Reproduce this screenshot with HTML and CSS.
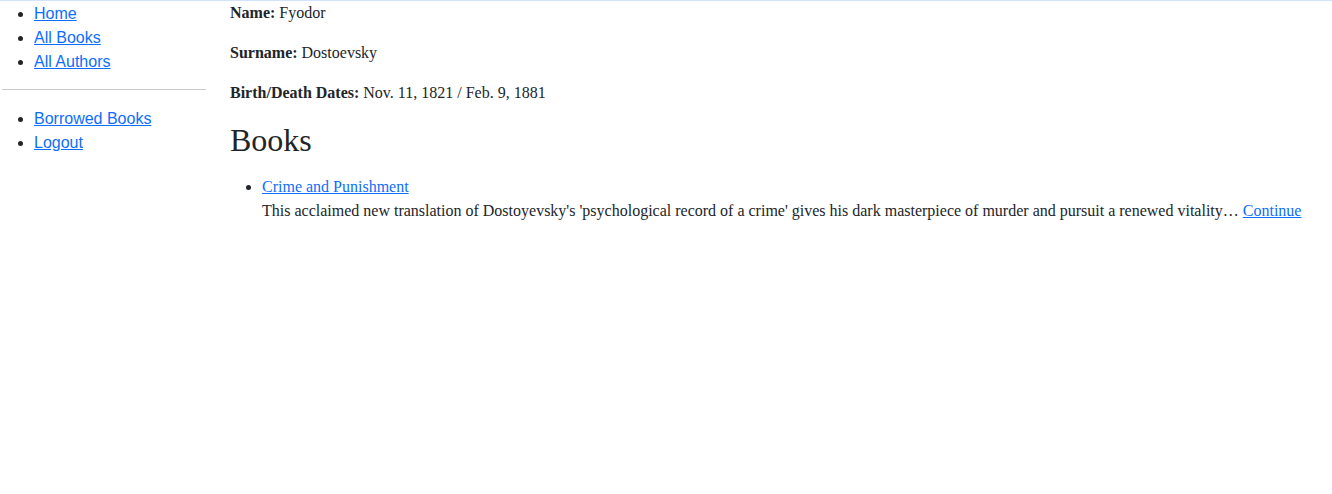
FILE: index.html
```html
<!DOCTYPE html>
<html lang="en">
<head>
<meta charset="utf-8">
<title>Author: Dostoevsky</title>
<link rel="stylesheet" href="styles.css">
</head>
<body>
<div class="layout">
  <nav class="sidebar">
    <ul class="nav-list">
      <li><a href="#">Home</a></li>
      <li><a href="#">All Books</a></li>
      <li><a href="#">All Authors</a></li>
    </ul>
    <hr class="divider">
    <ul class="nav-list">
      <li><a href="#">Borrowed Books</a></li>
      <li><a href="#">Logout</a></li>
    </ul>
  </nav>
  <main class="content">
    <p class="field"><strong>Name:</strong> Fyodor</p>
    <p class="field"><strong>Surname:</strong> Dostoevsky</p>
    <p class="field"><strong>Birth/Death Dates:</strong> Nov. 11, 1821 / Feb. 9, 1881</p>
    <h2 class="section-title">Books</h2>
    <ul class="book-list">
      <li>
        <a href="#">Crime and Punishment</a>
        <div class="summary">This acclaimed new translation of Dostoyevsky's 'psychological record of a crime' gives his dark masterpiece of murder and pursuit a renewed vitality&hellip; <a href="#">Continue</a></div>
      </li>
    </ul>
  </main>
</div>
</body>
</html>
```
FILE: styles.css
```css
html, body {
  margin: 0;
  padding: 0;
  background: #fff;
}

body {
  border-top: 1px solid #d3e3fd;
  color: #212529;
  font-family: "Liberation Serif", "Times New Roman", serif;
  font-size: 16px;
  line-height: 24px;
}

a {
  color: #0d6efd;
  text-decoration: underline;
}

.layout {
  display: flex;
  align-items: flex-start;
}

.sidebar {
  width: 204px;
  margin-left: 2px;
  flex: none;
  font-family: "Liberation Sans", Arial, sans-serif;
}

.nav-list {
  margin: 0 0 16px;
  padding-left: 32px;
}

.nav-list li {
  padding-top: 2px;
  line-height: 22px;
}

.divider {
  margin: 16px 0;
  border: 0;
  border-top: 1px solid #c8c9ca;
  height: 0;
}

.content {
  margin-left: 24px;
  flex: 1;
}

.field {
  margin: 0 0 16px;
}

.section-title {
  margin: 0 0 16px;
  font-size: 32px;
  font-weight: normal;
  line-height: 38px;
}

.book-list {
  margin: 0;
  padding-left: 32px;
}
```
